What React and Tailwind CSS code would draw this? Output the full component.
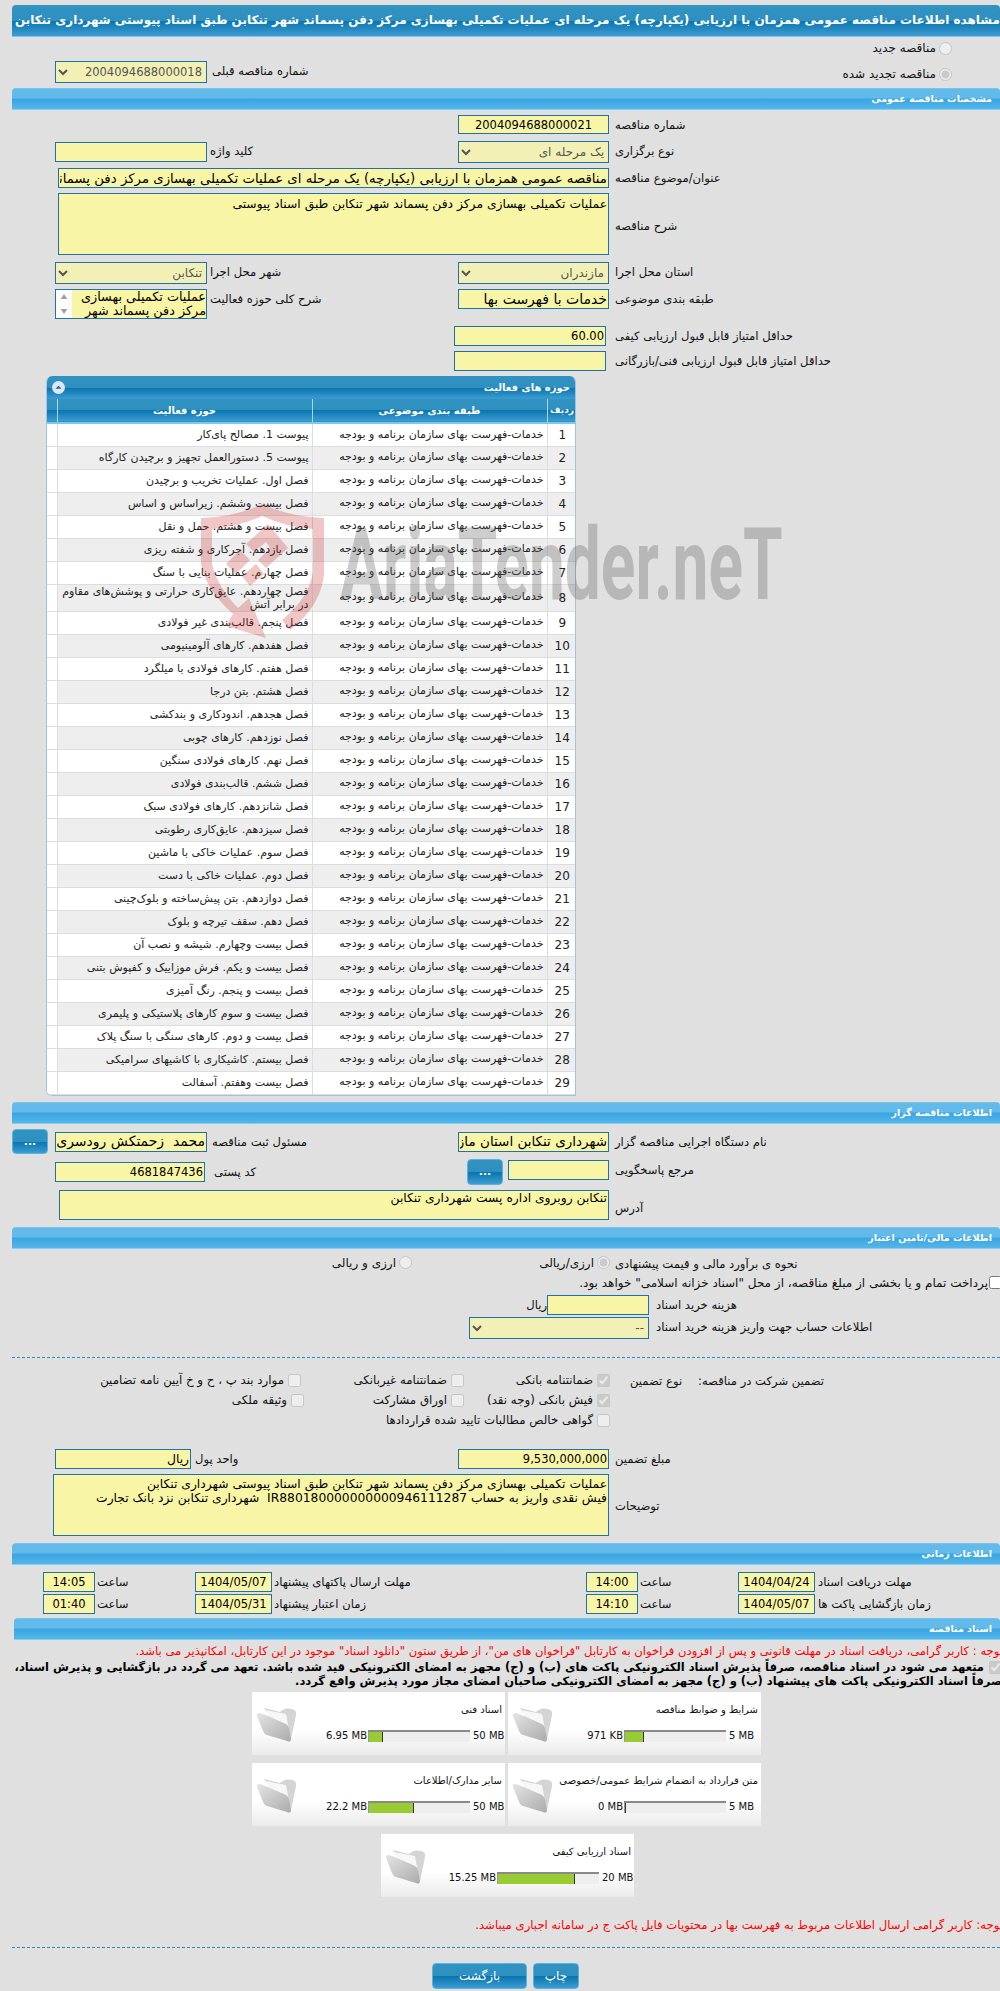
import React from "react";
import { twMerge } from "tailwind-merge";

const subject = "خدمات-فهرست بهای سازمان برنامه و بودجه";

const activities = [
  "پیوست 1. مصالح پای‌کار",
  "پیوست 5. دستورالعمل تجهیز و برچیدن کارگاه",
  "فصل اول. عملیات تخریب و برچیدن",
  "فصل بیست وششم. زیراساس و اساس",
  "فصل بیست و هشتم. حمل و نقل",
  "فصل یازدهم. آجرکاری و شفته ریزی",
  "فصل چهارم. عملیات بنایی با سنگ",
  "فصل چهاردهم. عایق‌کاری حرارتی و پوشش‌های مقاوم در برابر آتش",
  "فصل پنجم. قالب‌بندی غیر فولادی",
  "فصل هفدهم. کارهای آلومینیومی",
  "فصل هفتم. کارهای فولادی با میلگرد",
  "فصل هشتم. بتن درجا",
  "فصل هجدهم. اندودکاری و بندکشی",
  "فصل نوزدهم. کارهای چوبی",
  "فصل نهم. کارهای فولادی سنگین",
  "فصل ششم. قالب‌بندی فولادی",
  "فصل شانزدهم. کارهای فولادی سبک",
  "فصل سیزدهم. عایق‌کاری رطوبتی",
  "فصل سوم. عملیات خاکی با ماشین",
  "فصل دوم. عملیات خاکی با دست",
  "فصل دوازدهم. بتن پیش‌ساخته و بلوک‌چینی",
  "فصل دهم. سقف تیرچه و بلوک",
  "فصل بیست وچهارم. شیشه و نصب آن",
  "فصل بیست و یکم. فرش موزاییک و کفپوش بتنی",
  "فصل بیست و پنجم. رنگ آمیزی",
  "فصل بیست و سوم کارهای پلاستیکی و پلیمری",
  "فصل بیست و دوم. کارهای سنگی با سنگ پلاک",
  "فصل بیستم. کاشیکاری با کاشیهای سرامیکی",
  "فصل بیست وهفتم. آسفالت",
];

const formGrid = "grid grid-cols-[43px_152px_251px_151px_1fr] items-start";
const timeGrid = "grid grid-cols-[31px_52px_100px_77px_314px_52px_100px_77px_1fr] items-start h-[20px]";
const darkBar = "bg-[linear-gradient(to_bottom,#3193c2_0%,#2f90c0_50%,#0a76ae_52%,#3d9cd2_100%)]";

function Label({ children, className = "" }) {
  return (
    <div dir="rtl" className={twMerge("text-left pl-[6px] pt-px text-[11.6px] leading-[19px] text-[#111] whitespace-nowrap", className)}>
      {children}
    </div>
  );
}

function Field({ value = "", className = "" }) {
  return (
    <input
      dir="rtl"
      readOnly
      value={value}
      className={twMerge("block w-full h-[20px] border border-[#1d73a5] bg-[#f8f6a6] px-px text-[11.5px] text-black outline-none", className)}
    />
  );
}

function Area({ value = "", className = "" }) {
  return (
    <textarea
      dir="rtl"
      readOnly
      value={value}
      className={twMerge("block w-full resize-none overflow-hidden border border-[#1d73a5] bg-[#f8f6a6] px-px text-[12.3px] leading-[14px] text-black outline-none", className)}
    />
  );
}

function Pick({ value, className = "" }) {
  return (
    <select
      dir="rtl"
      disabled
      value={value}
      onChange={() => {}}
      className={twMerge("block w-full h-[22px] border border-[#1d73a5] bg-[#f3f0b6] text-[12px] text-[#555] opacity-100 outline-none", className)}
    >
      <option value={value}>{value}</option>
    </select>
  );
}

function Section({ title, className = "" }) {
  return (
    <div dir="rtl" className={`h-[22px] border-b border-[#7fd0f5] rounded-t-[4px] pr-2 text-[9.5px] font-bold leading-[21px] text-white bg-[linear-gradient(to_bottom,#7cc8ee_0%,#62baea_8%,#62baea_48%,#39a5e2_52%,#55b5e8_100%)] ${className}`}>
      {title}
    </div>
  );
}

function Dots({ className = "" }) {
  return (
    <button className={`rounded-[4px] border border-[#56b4e0] text-[11px] font-bold leading-none text-white ${darkBar} ${className}`}>
      ...
    </button>
  );
}

function Check({ label, checked = false, className = "" }) {
  return (
    <label dir="rtl" className={`flex items-center gap-[4px] h-[20px] text-[11.8px] text-[#111] whitespace-nowrap ${className}`}>
      <input type="checkbox" disabled checked={checked} onChange={() => {}} className="m-0 size-[13px]" />
      {label}
    </label>
  );
}

function Radio({ label, checked = false, className = "" }) {
  return (
    <label dir="rtl" className={`flex items-center gap-[3px] text-[12px] text-[#111] whitespace-nowrap ${className}`}>
      <input type="radio" disabled checked={checked} onChange={() => {}} className="m-0 size-[13px]" />
      {label}
    </label>
  );
}

function Folder() {
  return (
    <svg viewBox="0 0 41 36" className="ml-[4px] mt-[14px] h-[36px] w-[41px] shrink-0">
      <defs>
        <linearGradient id="folderFront" x1="0" y1="0" x2="1" y2="1">
          <stop offset="0" stopColor="#e4e4e4" />
          <stop offset="1" stopColor="#ababab" />
        </linearGradient>
      </defs>
      <path d="M8 2 L24 6 Q29 1 36 3 Q41 4 40 9 L35 33 L20 20 Z" fill="#d4d4d4" />
      <path d="M9 4 L30 8 L33 24 L18 18 Z" fill="#f7f7f7" />
      <path d="M1 10 Q0 7 4 7 L12 10 L30 18 Q32 19 33 22 L35 33 Q35 37 31 35 L11 29 Q8 28 7 25 Z" fill="url(#folderFront)" />
    </svg>
  );
}

function FileCard({ title, used, max, fill }) {
  return (
    <div className="flex h-[63px] w-[253px] bg-[linear-gradient(to_bottom,#ffffff_0%,#ffffff_60%,#ebebeb_100%)]">
      <Folder />
      <div className="min-w-0 flex-1">
        <div dir="rtl" className="mt-[11px] h-[20px] pr-[3px] text-[10px] leading-[14px] text-[#111] whitespace-nowrap">{title}</div>
        <div className="mt-[7px] flex h-[12px] items-center">
          <div className="flex-1 pr-[1px] text-right text-[10px] text-[#111] whitespace-nowrap">{used}</div>
          <div className="flex h-[12px] w-[102px] border-t-2 border-[#8a8a8a] bg-[#eeeeee]">
            <div className="h-full border-x border-x-[#333] border-l-[#999] bg-[#99cc33]" style={{ width: fill }} />
          </div>
          <div className="w-[35px] pl-[3px] text-[10px] text-[#111] whitespace-nowrap">{max}</div>
        </div>
      </div>
    </div>
  );
}

function TimeRow({ dateLabel, date, time, dateLabel2, date2, time2, className = "" }) {
  return (
    <div className={`${timeGrid} ${className}`}>
      <div />
      <Field value={time2} className="text-center" />
      <Label className="pl-[2px]">ساعت</Label>
      <Field value={date2} className="text-center" />
      <Label className="pl-[2px]">{dateLabel2}</Label>
      <Field value={time} className="text-center" />
      <Label className="pl-[2px]">ساعت</Label>
      <Field value={date} className="text-center" />
      <Label className="pl-[3px]">{dateLabel}</Label>
    </div>
  );
}

function ActivityPanel() {
  return (
    <div className="ml-[34px] mt-[5px] w-[530px] overflow-hidden rounded-t-[6px] rounded-bl-[6px] border-x border-b border-[#9cc6e0] bg-white">
      <div className={`flex h-[23px] items-center justify-between px-[5px] ${darkBar}`}>
        <span className="flex size-[13px] items-center justify-center rounded-full bg-[#dfe6f5]">
          <svg viewBox="0 0 10 10" className="size-[9px]"><path d="M1.5 6.5 L5 3 L8.5 6.5 Z" fill="#1f6f9f" /></svg>
        </span>
        <span dir="rtl" className="text-[10px] font-bold text-white">حوزه های فعالیت</span>
      </div>
      <table className="w-full table-fixed border-collapse text-[11px] text-[#222]">
        <colgroup>
          <col className="w-[10px]" />
          <col className="w-[255px]" />
          <col className="w-[235px]" />
          <col className="w-[30px]" />
        </colgroup>
        <thead>
          <tr className={`h-[24px] border-b-2 border-[#7cc8ee] text-[10px] font-bold text-white ${darkBar}`}>
            <th className="border-r border-[#a9d6ee]" />
            <th dir="rtl" className="border-r border-[#a9d6ee]">حوزه فعالیت</th>
            <th dir="rtl" className="border-r border-[#a9d6ee]">طبقه بندی موضوعی</th>
            <th dir="rtl" className="border-r border-[#a9d6ee] text-[9px]">ردیف</th>
          </tr>
        </thead>
        <tbody>
          {activities.map((name, i) => (
            <tr key={i} className={`h-[23px] border-b border-[#dddddd] ${i % 2 === 1 ? "bg-[#eeeeee]" : "bg-white"}`}>
              <td className="bg-white" />
              <td dir="rtl" className="border-l border-[#dddddd] pr-[3px] text-right leading-[13px]">{name}</td>
              <td dir="rtl" className="border-l border-[#dddddd] pr-[3px] text-right">{subject}</td>
              <td className="border-l border-[#dddddd] text-center text-[12px]">{i + 1}</td>
            </tr>
          ))}
        </tbody>
      </table>
    </div>
  );
}

function ListBox({ value }) {
  return (
    <div className="relative h-[30px]">
      <textarea
        dir="rtl"
        readOnly
        value={value}
        className="block h-[30px] w-full resize-none overflow-hidden border border-[#1d73a5] bg-[#f8f6a6] pl-[17px] text-[12.8px] leading-[14px] text-black outline-none"
      />
      {/* scrollbar strip of the list */}
      <div className="absolute bottom-px left-px top-px flex w-[16px] flex-col items-center justify-between bg-white py-[4px]">
        <svg viewBox="0 0 8 6" className="h-[5px] w-[8px]"><path d="M4 0 L8 6 L0 6 Z" fill="#a0a0a0" /></svg>
        <svg viewBox="0 0 8 6" className="h-[5px] w-[8px]"><path d="M0 0 L8 0 L4 6 Z" fill="#a0a0a0" /></svg>
      </div>
    </div>
  );
}

function Watermark() {
  return (
    <div className="pointer-events-none absolute left-[200px] top-[502px] z-10 flex">
      <svg viewBox="0 0 125 136" className="h-[136px] w-[125px] shrink-0" fill="#c8282844">
        <path d="M1 16 Q36 15 62 2 Q90 15 124 16 L124 72 Q121 104 90 128 L82 118 Q109 96 113 70 L113 27 Q86 25 62 14 Q38 25 12 27 L12 62 Q17 84 38 106 L49 96 L66 136 L26 124 L33 112 Q6 88 1 62 Z" />
        <path d="M26 62 L40 48 L50 58 L36 72 Z M46 42 L68 22 L88 46 L66 66 L58 58 L70 46 L66 40 L54 50 Z M42 74 L56 62 L64 72 L50 84 Z" />
      </svg>
      <span className="ml-[15px] mt-[13px] origin-left scale-x-[0.64] font-['Roboto',sans-serif] text-[100px] font-bold leading-[100px] text-[#5a5a5a4d] whitespace-nowrap">
        AriaTender.neT
      </span>
    </div>
  );
}

export default function App() {
  return (
    <div className="relative h-[1991px] w-[1000px] overflow-hidden bg-[#e0e0e0] pl-3 pt-[5px] font-['DejaVu_Sans',sans-serif]">
      <Watermark />

      <div dir="rtl" className={`h-[32px] whitespace-nowrap rounded-t-[4px] border-b border-[#7cc8ee] text-[12px] font-bold leading-[30px] text-white ${darkBar}`}>
        مشاهده اطلاعات مناقصه عمومی همزمان با ارزیابی (یکپارچه) یک مرحله ای عملیات تکمیلی بهسازی مرکز دفن پسماند شهر تنکابن طبق اسناد پیوستی شهرداری تنکابن
      </div>

      <Radio label="مناقصه جدید" className="mt-[4px] h-[14px] pr-[48px]" />

      <div className={`${formGrid} mt-[6px]`}>
        <div />
        <Pick value="2004094688000018" className="text-[11.5px]" />
        <Label className="pl-[5px]">شماره مناقصه قبلی</Label>
        <div />
        <Radio label="مناقصه تجدید شده" checked className="mt-[4px] pr-[48px]" />
      </div>

      <Section title="مشخصات مناقصه عمومی" className="mt-[5px]" />

      <div className={`${formGrid} mt-[5px]`}>
        <div /><div /><div />
        <Field value="2004094688000021" className="h-[19px] text-center" />
        <Label>شماره مناقصه</Label>
      </div>

      <div className={`${formGrid} mt-[6px]`}>
        <div />
        <Field className="mt-px" />
        <Label className="pl-[3px]">کلید واژه</Label>
        <Pick value="یک مرحله ای" />
        <Label>نوع برگزاری</Label>
      </div>

      <div className={`${formGrid} mt-[5px]`}>
        <div />
        <div className="col-span-3 ml-[3px]">
          <Field value="مناقصه عمومی همزمان با ارزیابی (یکپارچه) یک مرحله ای عملیات تکمیلی بهسازی مرکز دفن پسماند شهر تنکابن طبق اسناد پیوستی شهرداری تنکابن" className="text-[13.3px]" />
        </div>
        <Label>عنوان/موضوع مناقصه</Label>
      </div>

      <div className={`${formGrid} mt-[5px]`}>
        <div />
        <div className="col-span-3 ml-[3px]">
          <Area value="عملیات تکمیلی بهسازی مرکز دفن پسماند شهر تنکابن طبق اسناد پیوستی" className="h-[62px] pt-[3px]" />
        </div>
        <Label className="mt-[23px]">شرح مناقصه</Label>
      </div>

      <div className={`${formGrid} mt-[7px]`}>
        <div />
        <Pick value="تنکابن" />
        <Label className="pl-[3px]">شهر محل اجرا</Label>
        <Pick value="مازندران" />
        <Label>استان محل اجرا</Label>
      </div>

      <div className={`${formGrid} mt-[5px] h-[30px]`}>
        <div />
        <ListBox value="عملیات تکمیلی بهسازی مرکز دفن پسماند شهر تنکابن طبق اسناد پیوستی" />
        <Label className="pl-[3px]">شرح کلی حوزه فعالیت</Label>
        <Field value="خدمات با فهرست بها" className="text-[14px]" />
        <Label>طبقه بندی موضوعی</Label>
      </div>

      <div className={`${formGrid} mt-[7px]`}>
        <div /><div /><div />
        <Field value="60.00" className="-ml-[4px] w-[152px] pr-px" />
        <Label>حداقل امتیاز قابل قبول ارزیابی کیفی</Label>
      </div>

      <div className={`${formGrid} mt-[5px]`}>
        <div /><div /><div />
        <Field className="-ml-[4px] w-[152px]" />
        <Label>حداقل امتیاز قابل قبول ارزیابی فنی/بازرگانی</Label>
      </div>

      <ActivityPanel />

      <Section title="اطلاعات مناقصه گزار" className="mt-[6px]" />

      <div className={`${formGrid} mt-[5px]`}>
        <Dots className="h-[25px] w-[36px]" />
        <Field value="محمد  زحمتکش رودسری" className="mt-[3px] text-[14px]" />
        <Label className="mt-[3px] pl-[5px]">مسئول ثبت مناقصه</Label>
        <Field value="شهرداری تنکابن استان مازندران" className="mt-[3px] text-[13.5px]" />
        <Label className="mt-[3px]">نام دستگاه اجرایی مناقصه گزار</Label>
      </div>

      <div className={`${formGrid} mt-[5px] h-[26px]`}>
        <div />
        <Field value="4681847436" className="mt-[3px] w-[150px] pr-[1px]" />
        <Label className="mt-[3px] pl-[7px]">کد پستی</Label>
        <div className="flex items-start">
          <Dots className="ml-[9px] h-[26px] w-[36px] shrink-0" />
          <Field className="ml-[5px] mt-px min-w-0" />
        </div>
        <Label className="mt-px">مرجع پاسخگویی</Label>
      </div>

      <div className={`${formGrid} mt-[5px]`}>
        <div />
        <div className="col-span-3 ml-[4px]">
          <Area value="تنکابن روبروی اداره پست شهرداری تنکابن" className="h-[30px]" />
        </div>
        <Label className="mt-[8px]">آدرس</Label>
      </div>

      <Section title="اطلاعات مالی/تامین اعتبار" className="mt-[7px]" />

      <div className={`${formGrid} mt-[5px] h-[18px]`}>
        <div /><div />
        <div className="pr-[46px]"><Radio label="ارزی و ریالی" /></div>
        <div className="-mr-px"><Radio label="ارزی/ریالی" checked /></div>
        <Label>نحوه ی برآورد مالی و قیمت پیشنهادی</Label>
      </div>

      <label dir="rtl" className="mt-[2px] flex h-[18px] items-center gap-[1px] text-[12px] text-[#111] whitespace-nowrap">
        <input type="checkbox" className="m-0 -mr-[2px] size-[13px] shrink-0" />
        پرداخت تمام و یا بخشی از مبلغ مناقصه، از محل "اسناد خزانه اسلامی" خواهد بود.
      </label>

      <div className="mt-[3px] flex h-[20px] pl-[515px]">
        <div dir="rtl" className="w-[20px] text-left text-[11.6px] leading-[20px] text-[#111]">ریال</div>
        <Field className="w-[102px]" />
        <Label className="pl-[7px]">هزینه خرید اسناد</Label>
      </div>

      <div className="mt-[2px] flex h-[22px] pl-[457px]">
        <Pick value="--" className="w-[180px]" />
        <Label className="pl-[7px]">اطلاعات حساب جهت واریز هزینه خرید اسناد</Label>
      </div>

      <div className="mt-[18px] border-t border-dashed border-[#2a8fbf]" />

      <div className="mt-[13px] grid grid-cols-[289px_163px_146px_1fr]">
        <Check label="موارد بند پ ، ح و خ آیین نامه تضامین" />
        <Check label="ضمانتنامه غیربانکی" />
        <Check label="ضمانتنامه بانکی" checked />
        <div className="flex h-[20px] pl-[20px] text-[11.6px] leading-[20px] text-[#111]">
          <span dir="rtl" className="w-[68px] text-left">نوع تضمین</span>
          <span dir="rtl">تضمین شرکت در مناقصه:</span>
        </div>
        <Check label="وثیقه ملکی" className="-mr-[3px]" />
        <Check label="اوراق مشارکت" />
        <Check label="فیش بانکی (وجه نقد)" checked />
        <div />
        <div />
        <div />
        <Check label="گواهی خالص مطالبات تایید شده قراردادها" />
      </div>

      <div className={`${formGrid} mt-[18px]`}>
        <div />
        <div className="col-span-2 flex">
          <Field value="ریال" className="w-[136px] shrink-0 text-[12.3px]" />
          <Label className="pl-[4px]">واحد پول</Label>
        </div>
        <Field value="9,530,000,000" />
        <Label>مبلغ تضمین</Label>
      </div>

      <div className={`${formGrid} mt-[5px]`}>
        <div />
        <div className="col-span-3 -ml-[2px]">
          <Area
            value={"عملیات تکمیلی بهسازی مرکز دفن پسماند شهر تنکابن طبق اسناد پیوستی شهرداری تنکابن\nفیش نقدی واریز به حساب IR880180000000000946111287  شهرداری تنکابن نزد بانک تجارت"}
            className="h-[62px] pt-[2px]"
          />
        </div>
        <Label className="mt-[22px]">توضیحات</Label>
      </div>

      <Section title="اطلاعات زمانی" className="mt-[7px]" />

      <TimeRow
        className="mt-[7px]"
        dateLabel="مهلت دریافت اسناد"
        date="1404/04/24"
        time="14:00"
        dateLabel2="مهلت ارسال پاکتهای پیشنهاد"
        date2="1404/05/07"
        time2="14:05"
      />
      <TimeRow
        className="mt-[2px]"
        dateLabel="زمان بازگشایی پاکت ها"
        date="1404/05/07"
        time="14:10"
        dateLabel2="زمان اعتبار پیشنهاد"
        date2="1404/05/31"
        time2="01:40"
      />

      <Section title="اسناد مناقصه" className="ml-[2px] mt-[4px]" />

      <div dir="rtl" className="-mr-[3px] mt-[4px] h-[14px] whitespace-nowrap text-[11.6px] leading-[14px] text-[#ff0000]">
        توجه : کاربر گرامی، دریافت اسناد در مهلت قانونی و پس از افزودن فراخوان به کارتابل "فراخوان های من"، از طریق ستون "دانلود اسناد" موجود در این کارتابل، امکانپذیر می باشد.
      </div>

      <p dir="rtl" className="-mr-[2px] mt-[2px] h-[28px] whitespace-nowrap text-[11.5px] font-bold leading-[14px] text-black">
        <input type="checkbox" disabled checked onChange={() => {}} className="m-0 ml-[5px] size-[13px] align-middle" />
        متعهد می شود در اسناد مناقصه، صرفاً پذیرش اسناد الکترونیکی پاکت های (ب) و (ج) مجهز به امضای الکترونیکی قید شده باشد. تعهد می گردد در بازگشایی و پذیرش اسناد،
        <br />
        صرفاً اسناد الکترونیکی پاکت های پیشنهاد (ب) و (ج) مجهز به امضای الکترونیکی صاحبان امضای مجاز مورد پذیرش واقع گردد.
      </p>

      <div className="ml-[240px] mt-[4px] flex gap-[3px]">
        <FileCard title="اسناد فنی" used="6.95 MB" max="50 MB" fill={15} />
        <FileCard title="شرایط و ضوابط مناقصه" used="971 KB" max="5 MB" fill={20} />
      </div>
      <div className="ml-[240px] mt-[8px] flex gap-[3px]">
        <FileCard title="سایر مدارک/اطلاعات" used="22.2 MB" max="50 MB" fill={46} />
        <FileCard title="متن قرارداد به انضمام شرایط عمومی/خصوصی" used="0 MB" max="5 MB" fill={1} />
      </div>
      <div className="ml-[369px] mt-[8px]">
        <FileCard title="اسناد ارزیابی کیفی" used="15.25 MB" max="20 MB" fill={78} />
      </div>

      <div dir="rtl" className="-mr-[3px] mt-[21px] h-[14px] whitespace-nowrap text-[11.7px] leading-[14px] text-[#ff0000]">
        توجه: کاربر گرامی ارسال اطلاعات مربوط به فهرست بها در محتویات فایل پاکت ج در سامانه اجباری میباشد.
      </div>

      <div className="mt-[15px] border-t border-dashed border-[#2a8fbf]" />

      <div className="ml-[420px] mt-[15px] flex gap-[6px]">
        <button dir="rtl" className={`h-[26px] w-[95px] rounded-[4px] border border-[#56b4e0] text-[12px] text-white ${darkBar}`}>بازگشت</button>
        <button dir="rtl" className={`h-[26px] w-[46px] rounded-[4px] border border-[#56b4e0] text-[12px] text-white ${darkBar}`}>چاپ</button>
      </div>
    </div>
  );
}
